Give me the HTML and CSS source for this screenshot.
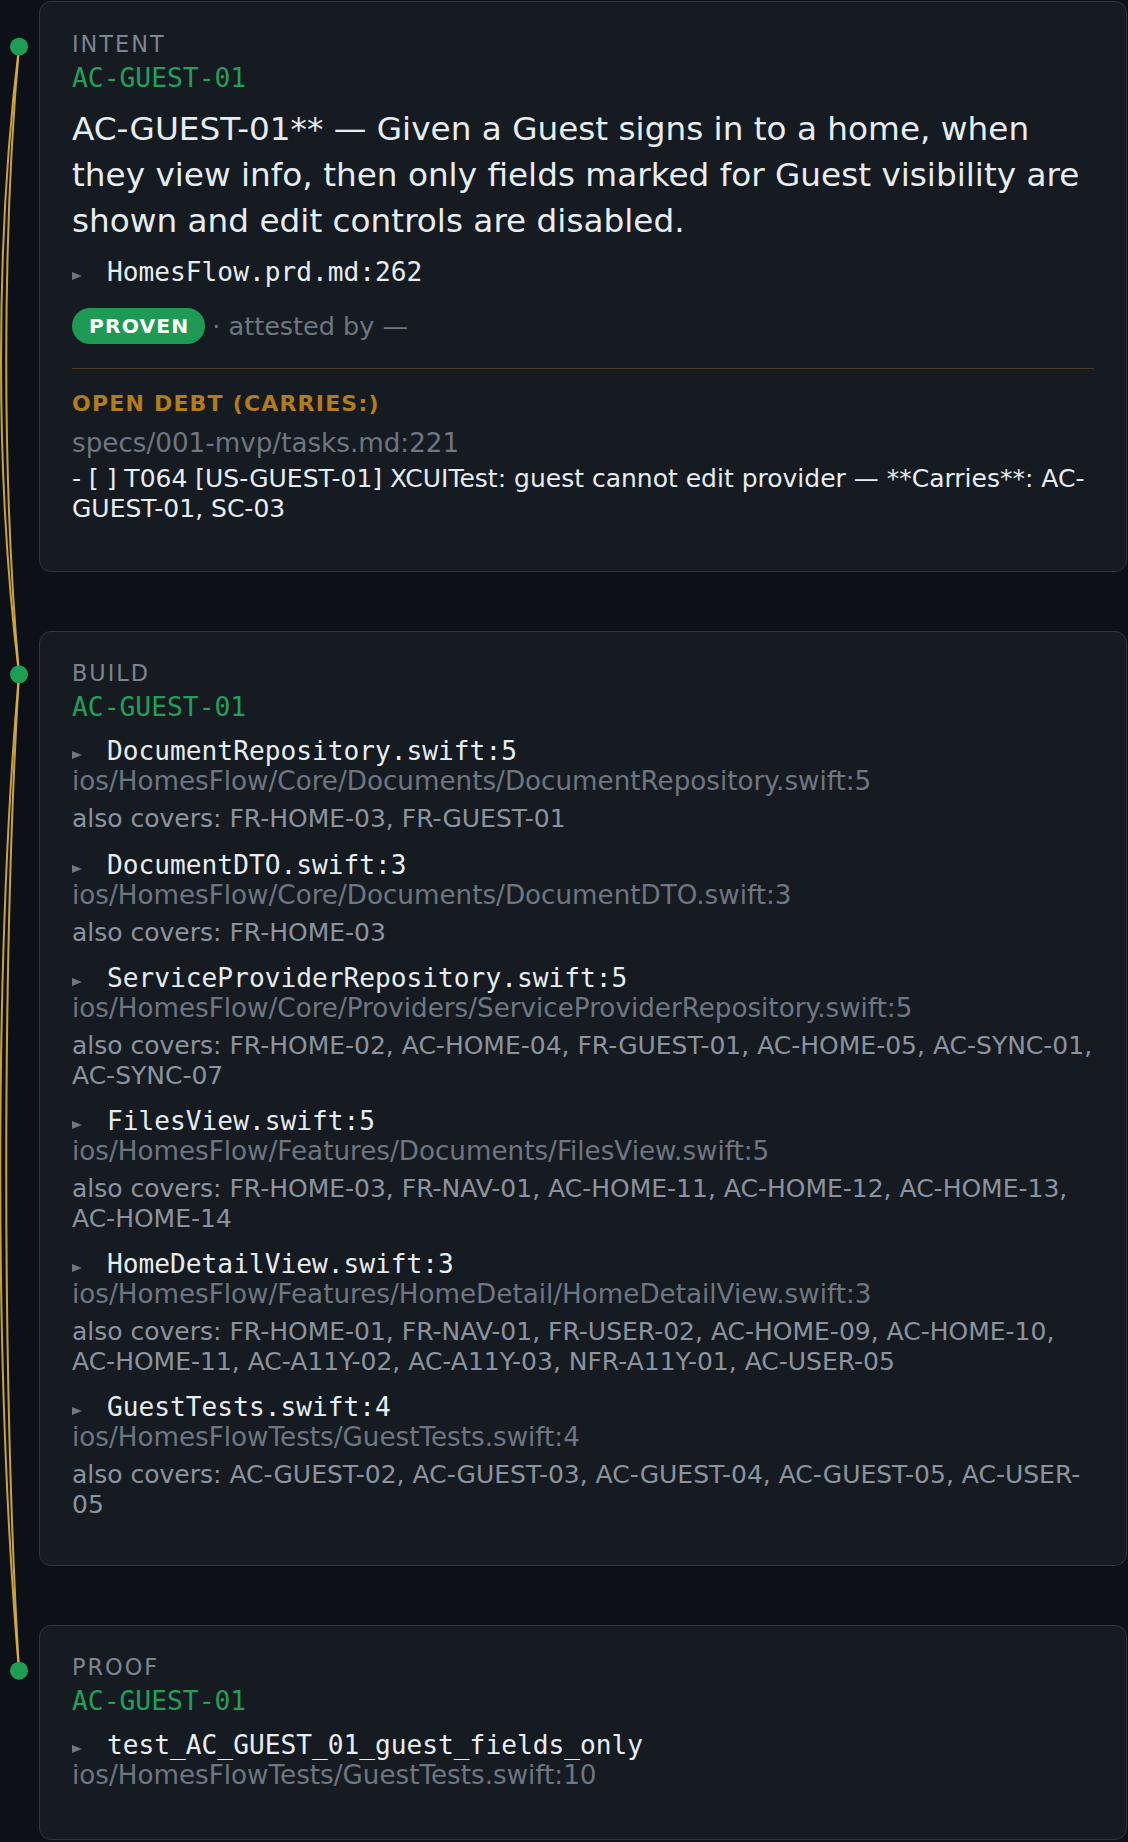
FILE: index.html
```html
<!DOCTYPE html>
<html lang="en">
<head>
<meta charset="utf-8">
<title>Trace</title>
<link rel="stylesheet" href="styles.css">
</head>
<body>
<div class="timeline">
  <svg class="links" width="39" height="1842" viewBox="0 0 39 1842" aria-hidden="true">
    <path d="M19,47 C-5,240 -5,480 19,674"/>
    <path d="M19,47 C2,240 2,480 19,674"/>
    <path d="M19,674 C-6,960 -6,1380 19,1671"/>
    <path d="M19,674 C2,960 2,1380 19,1671"/>
    <circle cx="19" cy="46.7" r="9"/>
    <circle cx="19" cy="674.3" r="9"/>
    <circle cx="19" cy="1670.7" r="9"/>
  </svg>

  <section class="step">
    <div class="card intent">
      <div class="kind">INTENT</div>
      <div class="rid">AC-GUEST-01</div>
      <p class="statement">AC-GUEST-01** — Given a Guest signs in to a home, when they view info, then only fields marked for Guest visibility are shown and edit controls are disabled.</p>
      <div class="src"><span class="caret"></span>HomesFlow.prd.md:262</div>
      <div class="status">
        <span class="badge">PROVEN</span>
        <span class="attest">· attested by —</span>
      </div>
      <div class="debt">
        <div class="debt-title">OPEN DEBT (CARRIES:)</div>
        <div class="debt-path">specs/001-mvp/tasks.md:221</div>
        <div class="debt-text">- [ ] T064 [US-GUEST-01] XCUITest: guest cannot edit provider — **Carries**: AC-GUEST-01, SC-03</div>
      </div>
    </div>
  </section>

  <section class="step">
    <div class="card">
      <div class="kind">BUILD</div>
      <div class="rid">AC-GUEST-01</div>
      <div class="item">
        <div class="file"><span class="caret"></span>DocumentRepository.swift:5</div>
        <div class="path">ios/HomesFlow/Core/Documents/DocumentRepository.swift:5</div>
        <div class="covers">also covers: FR-HOME-03, FR-GUEST-01</div>
      </div>
      <div class="item">
        <div class="file"><span class="caret"></span>DocumentDTO.swift:3</div>
        <div class="path">ios/HomesFlow/Core/Documents/DocumentDTO.swift:3</div>
        <div class="covers">also covers: FR-HOME-03</div>
      </div>
      <div class="item">
        <div class="file"><span class="caret"></span>ServiceProviderRepository.swift:5</div>
        <div class="path">ios/HomesFlow/Core/Providers/ServiceProviderRepository.swift:5</div>
        <div class="covers">also covers: FR-HOME-02, AC-HOME-04, FR-GUEST-01, AC-HOME-05, AC-SYNC-01, AC-SYNC-07</div>
      </div>
      <div class="item">
        <div class="file"><span class="caret"></span>FilesView.swift:5</div>
        <div class="path">ios/HomesFlow/Features/Documents/FilesView.swift:5</div>
        <div class="covers">also covers: FR-HOME-03, FR-NAV-01, AC-HOME-11, AC-HOME-12, AC-HOME-13, AC-HOME-14</div>
      </div>
      <div class="item">
        <div class="file"><span class="caret"></span>HomeDetailView.swift:3</div>
        <div class="path">ios/HomesFlow/Features/HomeDetail/HomeDetailView.swift:3</div>
        <div class="covers">also covers: FR-HOME-01, FR-NAV-01, FR-USER-02, AC-HOME-09, AC-HOME-10, AC-HOME-11, AC-A11Y-02, AC-A11Y-03, NFR-A11Y-01, AC-USER-05</div>
      </div>
      <div class="item">
        <div class="file"><span class="caret"></span>GuestTests.swift:4</div>
        <div class="path">ios/HomesFlowTests/GuestTests.swift:4</div>
        <div class="covers">also covers: AC-GUEST-02, AC-GUEST-03, AC-GUEST-04, AC-GUEST-05, AC-USER-05</div>
      </div>
    </div>
  </section>

  <section class="step">
    <div class="card">
      <div class="kind">PROOF</div>
      <div class="rid">AC-GUEST-01</div>
      <div class="item item-bare">
        <div class="file"><span class="caret"></span>test_AC_GUEST_01_guest_fields_only</div>
        <div class="path">ios/HomesFlowTests/GuestTests.swift:10</div>
      </div>
    </div>
  </section>
</div>
</body>
</html>
```

FILE: styles.css
```css
html, body {
  margin: 0;
  padding: 0;
  background: #0d1117;
}

body {
  font-family: "DejaVu Sans", "Liberation Sans", sans-serif;
  color: #e6edf3;
  overflow: hidden;
}

.timeline {
  position: relative;
  display: flex;
  flex-direction: column;
  gap: 59px;
  padding: 1px 1px 0 39px;
}

.links {
  position: absolute;
  left: 0;
  top: 0;
  overflow: hidden;
}

.links path {
  fill: none;
  stroke: #e0b145;
  stroke-width: 2;
  opacity: 0.9;
}

.links circle {
  fill: #1f9d55;
}

.card {
  background: #161b22;
  border: 1px solid #30363d;
  border-radius: 12px;
  padding: 28px 32px 30px;
}

.card.intent {
  padding-top: 29px;
}

.kind {
  font-size: 22.4px;
  line-height: 26px;
  letter-spacing: 2px;
  color: #7d8590;
}

.rid {
  font-family: "DejaVu Sans Mono", "Liberation Mono", monospace;
  font-size: 26.3px;
  line-height: 30px;
  color: #22a05a;
  margin-top: 6px;
  margin-bottom: 14px;
}

.intent .rid {
  margin-bottom: 13px;
}

.statement {
  margin: 0;
  font-size: 32.7px;
  line-height: 46px;
  color: #e6edf3;
}

.src,
.file {
  font-family: "DejaVu Sans Mono", "Liberation Mono", monospace;
  font-size: 26.2px;
  line-height: 30px;
  color: #e6edf3;
  white-space: nowrap;
}

.src {
  margin-top: 13px;
}

.caret {
  display: inline-block;
  width: 0;
  height: 0;
  border-left: 10px solid #6e7681;
  border-top: 4.7px solid transparent;
  border-bottom: 4.7px solid transparent;
  margin-right: 25px;
  vertical-align: 1px;
}

.status {
  margin-top: 21px;
  display: flex;
  align-items: center;
}

.badge {
  display: inline-flex;
  align-items: center;
  height: 36px;
  padding: 0 16px 0 17px;
  border-radius: 18px;
  background: #1f9a55;
  color: #ffffff;
  font-weight: bold;
  font-size: 20.3px;
  letter-spacing: 1.1px;
}

.attest {
  margin-left: 7px;
  font-size: 25.5px;
  line-height: 30px;
  color: #6e7681;
}

.debt {
  margin-top: 24px;
  border-top: 1px solid rgba(210, 153, 34, 0.28);
  padding-top: 22px;
}

.debt-title {
  font-size: 22px;
  line-height: 26px;
  font-weight: bold;
  letter-spacing: 1.2px;
  color: #b27b1c;
}

.debt-path {
  margin-top: 11px;
  font-size: 26.2px;
  line-height: 30px;
  color: #6e7681;
}

.debt-text {
  margin-top: 6px;
  margin-bottom: 18px;
  font-size: 25px;
  line-height: 29.5px;
  color: #e6edf3;
}

.item {
  margin-bottom: 16px;
}

.item-bare {
  margin-bottom: 19px;
}

.path {
  font-size: 26.2px;
  line-height: 30px;
  color: #6e7681;
}

.covers {
  margin-top: 8px;
  font-size: 25px;
  line-height: 29.5px;
  color: #8b949e;
}
```
